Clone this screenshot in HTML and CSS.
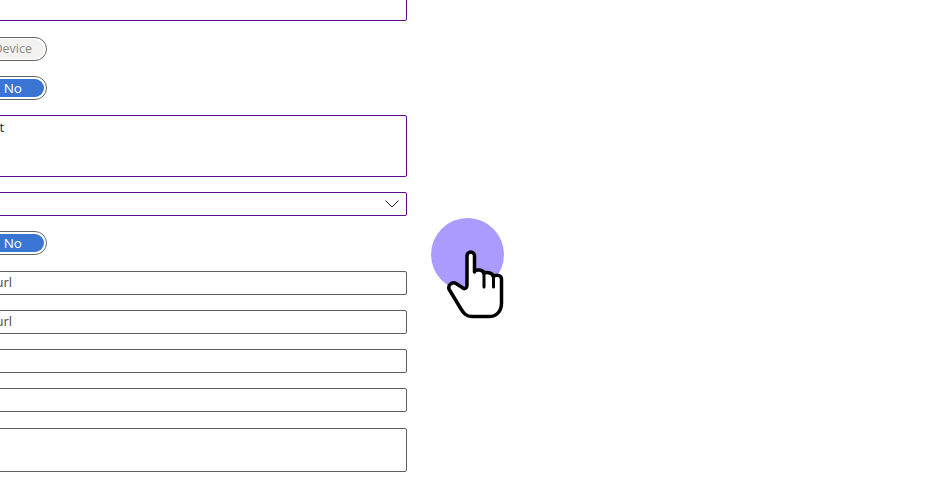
FILE: index.html
```html
<!DOCTYPE html>
<html lang="en">
<head>
<meta charset="utf-8">
<title>Form</title>
<link rel="stylesheet" href="styles.css">
</head>
<body>
<main class="form">
  <div class="field field-accent"></div>
  <div class="toggle toggle-off row-wide"><span class="seg">Device</span></div>
  <div class="toggle"><span class="seg seg-on">No</span></div>
  <div class="field field-accent field-tall"><span class="value value-dark">Default</span></div>
  <div class="field field-accent field-select">
    <svg class="chevron" viewBox="0 0 14 8" aria-hidden="true"><path d="M0.5 0.5 L7 7 L13.5 0.5"/></svg>
  </div>
  <div class="toggle"><span class="seg seg-on">No</span></div>
  <div class="field row-wide"><span class="value">Redirect url</span></div>
  <div class="field"><span class="value">Redirect url</span></div>
  <div class="field"></div>
  <div class="field"></div>
  <div class="field field-notes row-wide"></div>
</main>
<div class="pointer" aria-hidden="true">
  <svg class="hand" viewBox="440 240 70 85">
    <path class="hand-shape" d="M467 283 L467 256 C467 250.500 474.500 250.500 474.500 256 L474.500 272 C475 269 483.500 269 484 273.500 C484.500 272 493 272 493.500 277 C494 274.500 501.500 274.500 501.500 279 L501.500 303 C501.500 312 496 316.500 489 316.500 L472 316.500 C466 316.500 463.500 313 461 309 L449.500 290 C447 286 452 281 456 283.500 L463 288 C465 289.500 467 288 467 285 Z"/>
    <path class="hand-line" d="M484 273.500 L484 287 M493.500 277 L493.500 287"/>
  </svg>
</div>
</body>
</html>
```
FILE: styles.css
```css
html, body {
  margin: 0;
  height: 100%;
  background: #fff;
  overflow: hidden;
}

.form {
  display: flex;
  flex-direction: column;
  gap: 15px;
  width: 507px;
  margin: -3px 0 0 -100px;
  font-family: "Open Sans", "Liberation Sans", sans-serif;
  font-size: 13px;
}

.row-wide {
  margin-top: 1px;
}

.field {
  box-sizing: border-box;
  height: 24px;
  padding: 0 7px 0 41px;
  display: flex;
  align-items: center;
  justify-content: space-between;
  border: 1px solid #605e5c;
  border-radius: 2px;
  background: #fff;
}

.field-accent {
  border-color: #5c0a8f;
}

.field-tall {
  height: 62px;
  align-items: flex-start;
  padding-top: 1px;
  padding-left: 59px;
}

.field-select {
  justify-content: flex-end;
}

.field-notes {
  height: 44px;
}

.value {
  color: #4a4a4a;
  line-height: 20px;
  margin-top: -2px;
  white-space: nowrap;
}

.value-dark {
  color: #00305c;
  margin-top: 0;
}

.chevron {
  width: 14px;
  height: 8px;
  fill: none;
  stroke: #222;
  stroke-width: 1;
}

.toggle {
  box-sizing: border-box;
  align-self: flex-start;
  display: flex;
  justify-content: flex-end;
  width: 147px;
  height: 24px;
  padding: 2px;
  border: 1px solid #666;
  border-radius: 12px;
  background: #fff;
}

.seg {
  line-height: 18px;
  font-size: 13.5px;
  color: #fff;
}

.seg-on {
  flex: 1;
  text-align: right;
  padding-right: 22px;
  border-radius: 9px;
  background: #3a75d4;
}

.toggle-off {
  padding: 1px 2px;
}

.toggle-off .seg {
  flex: 1;
  text-align: right;
  padding-right: 12px;
  font-size: 12.5px;
  color: #8a8886;
  line-height: 20px;
  border-radius: 10px;
  background: #f3f2f1;
}

.pointer {
  position: absolute;
  left: 431px;
  top: 218px;
  width: 73px;
  height: 73px;
  border-radius: 50%;
  background: #ab9bff;
}

.hand {
  position: absolute;
  left: 9px;
  top: 22px;
  width: 70px;
  height: 85px;
}

.hand-shape {
  fill: #fff;
  stroke: #000;
  stroke-width: 3.5;
  stroke-linejoin: round;
}

.hand-line {
  fill: none;
  stroke: #000;
  stroke-width: 3;
  stroke-linecap: round;
}
```
